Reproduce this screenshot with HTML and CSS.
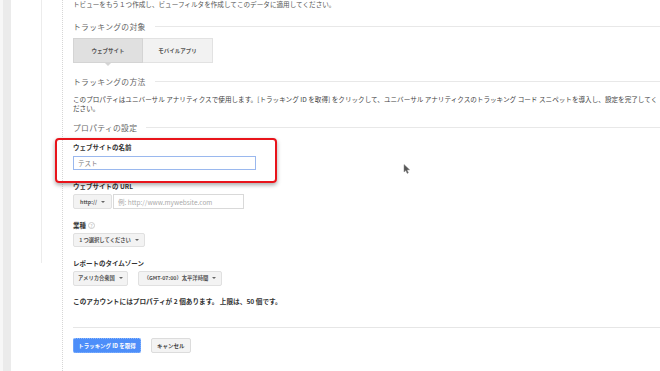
FILE: index.html
```html
<!DOCTYPE html>
<html lang="ja">
  <head>
    <meta charset="UTF-8" />
    <title>プロパティの作成</title>
    <link rel="stylesheet" href="styles.css">
  </head>
  <body>
    <div class="page">
      <!-- 左のナビ -->
      <div class="side">
        <div class="rail"></div>
        <div class="stripe"></div>
        <div class="nav"></div>
      </div>

      <div class="main">
        <p class="intro">トビューをもう１つ作成し、ビューフィルタを作成してこのデータに適用してください。</p>

        <div class="head">
          <span>トラッキングの対象</span>
          <div class="rule"></div>
        </div>
        <div class="tabs">
          <div class="tab on">ウェブサイト</div>
          <div class="tab">モバイルアプリ</div>
        </div>

        <div class="head head-b">
          <span>トラッキングの方法</span>
          <div class="rule"></div>
        </div>
        <p class="desc">このプロパティはユニバーサル アナリティクスで使用します。[トラッキング ID を取得] をクリックして、ユニバーサル アナリティクスのトラッキング コード スニペットを導入し、設定を完了してください。</p>

        <div class="head head-c">
          <span>プロパティの設定</span>
          <div class="rule"></div>
        </div>

        <div class="field field-name">
          <div class="mark"></div>
          <label class="label">ウェブサイトの名前</label>
          <div class="input name-input">テスト</div>
        </div>

        <div class="field field-url">
          <label class="label">ウェブサイトの URL</label>
          <div class="url-row">
            <div class="select proto">http:// <span class="caret"></span></div>
            <div class="input url-input">例: http://www.mywebsite.com</div>
          </div>
        </div>

        <div class="field">
          <label class="label">業種 <span class="help">?</span></label>
          <div class="select pick">1 つ選択してください <span class="caret"></span></div>
        </div>

        <div class="field">
          <label class="label">レポートのタイムゾーン</label>
          <div class="tz-row">
            <div class="select country">アメリカ合衆国 <span class="caret"></span></div>
            <div class="select zone">（GMT-07:00）太平洋時間 <span class="caret"></span></div>
          </div>
        </div>

        <p class="count">このアカウントにはプロパティが 2 個あります。 上限は、50 個です。</p>

        <div class="footer">
          <button class="btn primary">トラッキング ID を取得</button>
          <button class="btn">キャンセル</button>
        </div>
      </div>
    </div>

    <svg class="cursor" width="8" height="10" viewBox="0 0 8 10">
      <path d="M1 0.5 L1 8 L2.8 6.4 L4.2 9.4 L5.4 8.8 L4 5.9 L6.6 5.8 Z" fill="#555" stroke="#888" stroke-width="0.5" />
    </svg>
  </body>
</html>
```

FILE: styles.css
```css
* {
  margin: 0;
  padding: 0;
  box-sizing: border-box;
}

body {
  width: 660px;
  height: 371px;
  overflow: hidden;
  background: #fff;
  font-family: "Noto Sans CJK JP", "Liberation Sans", sans-serif;
  color: #444;
  position: relative;
}

.page {
  display: flex;
  height: 371px;
}

/* 左側 */
.side {
  display: flex;
  width: 62px;
  flex: none;
}
.rail {
  width: 3px;
  background: #f7f7f7;
}
.stripe {
  width: 8px;
  background: #ebebeb;
}
.nav {
  width: 31px;
  height: 263px;
  border-right: 1px solid #ececec;
}

.main {
  width: 598px;
  flex: none;
  border-left: 1px dotted #d6d6d6;
  padding-left: 10px;
}

.intro {
  font-size: 6.6px;
  line-height: 9px;
  color: #555;
}

/* 見出し */
.head {
  display: flex;
  align-items: center;
  margin-top: 12px;
  height: 10px;
  font-size: 7.8px;
  color: #666;
  letter-spacing: 0.3px;
}
.head .rule {
  flex: 1;
  height: 1px;
  background: #e8e8e8;
  margin-left: 9px;
}
.head-b {
  margin-top: 13px;
}
.head-c {
  margin-top: 9px;
}

/* タブ */
.tabs {
  display: flex;
  margin-top: 7px;
  height: 25px;
}
.tab {
  width: 70px;
  display: flex;
  align-items: center;
  justify-content: center;
  font-size: 5.5px;
  font-weight: bold;
  color: #555;
  background: #f2f2f2;
  border: 1px solid #e2e2e2;
  border-left: none;
}
.tab.on {
  position: relative;
  background: #e0e0e0;
  border: 1px solid #d4d4d4;
}
.tab.on::after {
  content: "";
  position: absolute;
  left: 31px;
  top: 24px;
  border-left: 3px solid transparent;
  border-right: 3px solid transparent;
  border-top: 3px solid #d4d4d4;
}

.desc {
  margin-top: 8.5px;
  font-size: 6.6px;
  line-height: 9.5px;
  color: #444;
}

/* フォーム */
.field {
  margin-top: 11.5px;
}
.field-name {
  position: relative;
  margin-top: 9.7px;
}
.field-url {
  margin-top: 12px;
}
.label {
  display: flex;
  align-items: center;
  gap: 2px;
  height: 9px;
  font-size: 6.5px;
  font-weight: bold;
  color: #333;
}
.help {
  display: flex;
  align-items: center;
  justify-content: center;
  width: 7px;
  height: 7px;
  border: 1px solid #ccc;
  border-radius: 50%;
  font-size: 5px;
  color: #bbb;
  font-weight: normal;
}

.input {
  border: 1px solid #d9d9d9;
  background: #fff;
  font-size: 6.5px;
  display: flex;
  align-items: center;
  padding-left: 4px;
}
.name-input {
  margin-top: 4.5px;
  width: 183px;
  height: 14px;
  border-color: #9ab8ee;
  color: #777;
}

.url-row,
.tz-row {
  display: flex;
  margin-top: 3.5px;
  height: 15px;
}
.url-input {
  width: 131px;
  margin-left: 1px;
  color: #aaa;
}

.select {
  display: flex;
  align-items: center;
  justify-content: center;
  gap: 4px;
  background: #f3f3f3;
  border: 1px solid #e0e0e0;
  border-radius: 2px;
  font-size: 5.3px;
  font-weight: bold;
  color: #555;
}
.caret {
  border-left: 2px solid transparent;
  border-right: 2px solid transparent;
  border-top: 2px solid #666;
}
.proto {
  width: 39px;
}
.pick {
  margin-top: 3.8px;
  width: 72px;
  height: 13.5px;
}
.country {
  width: 55px;
}
.zone {
  width: 84px;
  margin-left: 10px;
}

.count {
  margin-top: 11px;
  font-size: 6.65px;
  line-height: 9px;
  font-weight: bold;
  color: #333;
}

/* 赤い枠 */
.mark {
  position: absolute;
  left: -18px;
  top: -4px;
  width: 222px;
  height: 45px;
  border: 2.5px solid #e8141b;
  border-radius: 4px;
  box-shadow: 0 2px 4px rgba(0, 0, 0, 0.35);
  z-index: 2;
}

.footer {
  margin-top: 21px;
  border-top: 1px solid #e6e6e6;
  padding-top: 10px;
  display: flex;
  gap: 10px;
}
.btn {
  height: 15.5px;
  border: 1px solid #dcdcdc;
  border-radius: 2px;
  background: #f3f3f3;
  font-family: "Noto Sans CJK JP", sans-serif;
  font-size: 5.5px;
  font-weight: bold;
  color: #444;
  padding: 0 5px;
}
.btn.primary {
  width: 68px;
  padding: 0;
  background: #4d8ef9;
  border: 1px dotted #8ab8ff;
  color: #fff;
}

.cursor {
  position: absolute;
  left: 403px;
  top: 164px;
}
```
